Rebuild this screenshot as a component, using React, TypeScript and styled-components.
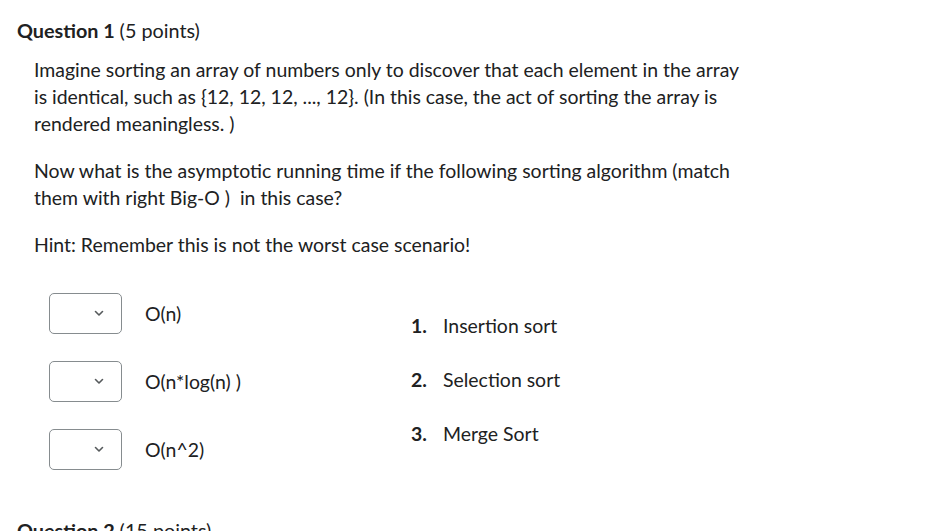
import React from "react";
import styled, { createGlobalStyle } from "styled-components";

const Global = createGlobalStyle`
  html, body { margin: 0; padding: 0; background: #fff; }
  body { font-family: Lato, "Open Sans", sans-serif; color: #202122; overflow: hidden; }
`;

const Page = styled.div`
  width: 950px;
  height: 531px;
  overflow: hidden;
  padding: 18px 0 0 17px;
  box-sizing: border-box;
`;

const Heading = styled.h2`
  margin: 0;
  font-size: 19.8px;
  line-height: 24px;
  font-weight: 700;
  color: #202122;
  span { font-weight: 400; }
`;

const Body = styled.div`
  padding-left: 17px;
  margin-top: 14px;
  width: 712px;
`;

const Para = styled.p`
  margin: 0 0 20px 0;
  font-size: 19.45px;
  line-height: 27px;
`;

const Match = styled.div`
  display: flex;
  margin-top: 35px;
`;

const Choices = styled.div`
  display: flex;
  flex-direction: column;
  gap: 27px;
  padding-left: 32px;
  width: 362px;
`;

const ChoiceRow = styled.div`
  display: flex;
  align-items: center;
  gap: 23px;
`;

const SelectBox = styled.div`
  width: 73px;
  height: 41px;
  box-sizing: border-box;
  border: 1px solid #868c8f;
  border-radius: 5px;
  display: flex;
  align-items: center;
  justify-content: flex-end;
  padding-right: 17px;
`;

const ChoiceText = styled.span`
  font-size: 19.45px;
  line-height: 24px;
`;

const Options = styled.ol`
  margin: 21px 0 0;
  padding: 0;
  list-style: none;
  display: flex;
  flex-direction: column;
  gap: 30px;
`;

const Option = styled.li`
  display: flex;
  font-size: 19.45px;
  line-height: 24px;
`;

const Num = styled.span`
  width: 32px;
  font-weight: 700;
`;

const Next = styled.h2`
  margin: 48px 0 0 0;
  font-size: 19.8px;
  line-height: 24px;
  font-weight: 700;
  span { font-weight: 400; }
`;

const Chevron = () => (
  <svg width="10" height="7" viewBox="0 0 10 7">
    <path d="M1.5 1.5 L5 5 L8.5 1.5" fill="none" stroke="#565a5c" strokeWidth="1.6" strokeLinecap="round" strokeLinejoin="round" />
  </svg>
);

const choices = ["O(n)", "O(n*log(n) )", "O(n^2)"];
const options = ["Insertion sort", "Selection sort", "Merge Sort"];

export default function App() {
  return (
    <Page>
      <Global />
      <Heading>
        Question 1 <span>(5 points)</span>
      </Heading>
      <Body>
        <Para>
          Imagine sorting an array of numbers only to discover that each element in the array is identical, such as
          {" {12, 12, 12, ..., 12}"}. (In this case, the act of sorting the array is rendered meaningless. )
        </Para>
        <Para>
          Now what is the asymptotic running time if the following sorting algorithm (match them with right Big-O )&nbsp; in this case?
        </Para>
        <Para>Hint: Remember this is not the worst case scenario!</Para>
      </Body>
      <Match>
        <Choices>
          {choices.map((c) => (
            <ChoiceRow key={c}>
              <SelectBox>
                <Chevron />
              </SelectBox>
              <ChoiceText>{c}</ChoiceText>
            </ChoiceRow>
          ))}
        </Choices>
        <Options>
          {options.map((o, i) => (
            <Option key={o}>
              <Num>{i + 1}.</Num>
              {o}
            </Option>
          ))}
        </Options>
      </Match>
      <Next>
        Question 2 <span>(15 points)</span>
      </Next>
    </Page>
  );
}
